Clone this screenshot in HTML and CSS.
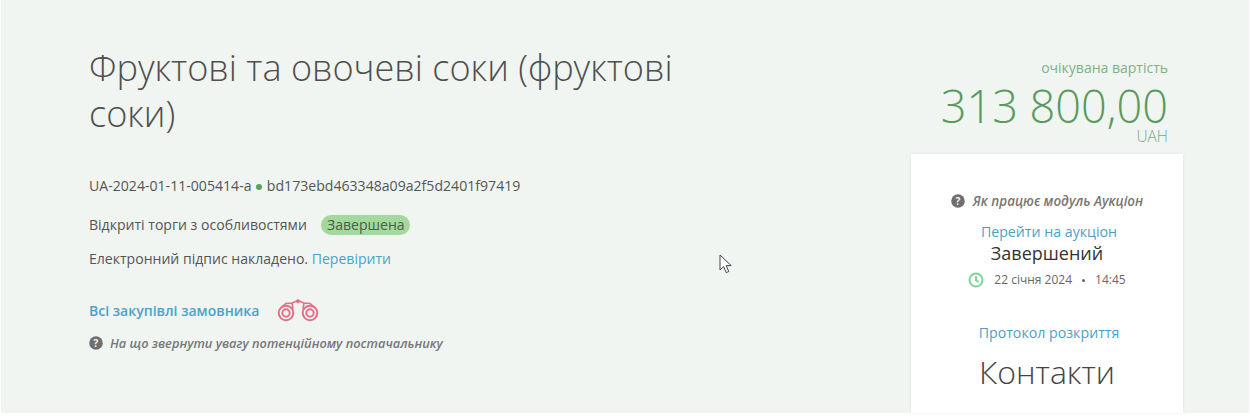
FILE: index.html
```html
<!DOCTYPE html>
<html lang="uk">
<head>
<meta charset="utf-8">
<title>Тендер</title>
<link rel="stylesheet" href="styles.css">
</head>
<body>
<main class="panel">
  <section class="main-col">
    <h1 class="title">Фруктові та овочеві соки (фруктові соки)</h1>
    <p class="row ids">UA-2024-01-11-005414-a <span class="dot"></span> bd173ebd463348a09a2f5d2401f97419</p>
    <p class="row type">Відкриті торги з особливостями <span class="badge">Завершена</span></p>
    <p class="row sign">Електронний підпис накладено. <a class="link" href="#">Перевірити</a></p>
    <div class="buyer">
      <a class="link buyer-link" href="#">Всі закупівлі замовника</a>
      <svg class="binoculars" viewBox="0 0 42 24" width="42" height="24" fill="none" stroke="#e86d86" stroke-width="2">
        <circle cx="9" cy="15" r="7.3"/><circle cx="9" cy="15" r="3.7"/>
        <circle cx="33" cy="15" r="7.3"/><circle cx="33" cy="15" r="3.7"/>
        <path d="M3.5 10 9 5.5 15 5 21 2.5 27 5 33 5.5 38.500 10M15 5 16 11M27 5 26 11" stroke-width="1.6"/>
        <circle cx="21" cy="3.2" r="2" fill="#e86d86" stroke="none"/>
      </svg>
    </div>
    <p class="hint main-hint"><svg class="q-icon" viewBox="0 0 14 14" width="14" height="14"><circle cx="7" cy="7" r="6.8" fill="#6f6f6f"/><text x="7" y="10.6" text-anchor="middle" class="q-mark">?</text></svg><em>На що звернути увагу потенційному постачальнику</em></p>
  </section>
  <aside class="side-col">
    <div class="price-label">очікувана вартість</div>
    <div class="price">313 800,00</div>
    <div class="currency">UAH</div>
    <div class="card">
      <p class="hint card-hint"><svg class="q-icon" viewBox="0 0 14 14" width="14" height="14"><circle cx="7" cy="7" r="6.8" fill="#6f6f6f"/><text x="7" y="10.6" text-anchor="middle" class="q-mark">?</text></svg><em>Як працює модуль Аукціон</em></p>
      <a class="link card-link" href="#">Перейти на аукціон</a>
      <div class="state">Завершений</div>
      <div class="date">
        <svg class="clock" viewBox="0 0 16 16" width="16" height="16" fill="none" stroke="#7fd49c" stroke-width="2"><circle cx="8" cy="8" r="6.5"/><path d="M8 4v4.4l2.8 1.6"/></svg>
        <span>22 січня 2024</span><span class="sep"></span><span>14:45</span>
      </div>
      <a class="link card-link protocol" href="#">Протокол розкриття</a>
      <h2 class="contacts">Контакти</h2>
    </div>
  </aside>
</main>
<svg class="cursor" viewBox="0 0 14 20" width="14" height="20"><path d="M1 1v15l3.600-3.400 2.600 6 2.600-1.100-2.600-5.900h5z" fill="#fff" stroke="#444" stroke-width="1"/></svg>
</body>
</html>
```
FILE: styles.css
```css
* { box-sizing: border-box; }
html, body { margin: 0; height: 419px; overflow: hidden; background: #fff; }
body { font-family: "Open Sans", "Noto Sans", sans-serif; color: #555; position: relative; }
p { margin: 0; }
.panel {
  height: 413px;
  margin-left: 1px;
  margin-right: 1px;
  background: #f0f5f2;
  display: flex;
  justify-content: space-between;
  padding: 44px 66px 0 88px;
}
.main-col { width: 620px; }
.title {
  margin: 0 0 40px;
  font-size: 36.1px;
  font-weight: 300;
  line-height: 46px;
  color: #4f4f4f;
}
.row { font-size: 14.05px; line-height: 20px; color: #555; }
.ids { margin-bottom: 19px; font-size: 14.1px; }
.dot { display: inline-block; width: 6px; height: 6px; border-radius: 50%; background: #5aa25f; margin: 0 1px; vertical-align: 1px; }
.type { margin-bottom: 14px; }
.badge {
  display: inline-block;
  margin-left: 11px;
  padding: 0 5.5px;
  line-height: 20px;
  border-radius: 10px;
  background: #a3d99b;
  color: #47604a;
}
.link { color: #4aa3c8; text-decoration: none; }
.buyer { display: flex; align-items: center; gap: 18px; margin-top: 29px; height: 24px; }
.buyer-link { font-weight: 600; font-size: 14.05px; }
.hint { display: flex; align-items: center; gap: 7px; font-weight: 600; color: #777; line-height: 20px; }
.main-hint { font-size: 12.8px; margin-top: 11px; }
.q-mark { font-size: 10px; font-weight: 700; fill: #f0f5f2; font-family: "Open Sans", sans-serif; }
.side-col { width: 272px; display: flex; flex-direction: column; }
.price-label, .price, .currency { text-align: right; padding-right: 15px; color: #5a9a5e; }
.price-label { font-size: 14px; line-height: 20px; color: #7fb184; margin-top: 14px; }
.price { font-size: 45.1px; font-weight: 300; line-height: 44px; margin-top: 6px; }
.currency { font-size: 15.5px; font-weight: 300; line-height: 16px; color: #7fa585; }
.card {
  background: #fff;
  height: 280px;
  margin-top: 10px;
  box-shadow: 0 0 3px rgba(0,0,0,.08);
  display: flex;
  flex-direction: column;
  align-items: center;
  padding-top: 37px;
}
.card-hint { font-size: 13.4px; gap: 8px; }
.card-link { font-size: 14.2px; line-height: 20px; color: #4f9fc4; margin-top: 11px; margin-left: 4px; }
.state { font-size: 18px; line-height: 22px; color: #333; }
.date { display: flex; align-items: center; font-size: 12px; line-height: 20px; color: #666; margin-top: 6px; gap: 10px; }
.sep { width: 3px; height: 3px; background: #666; border-radius: 50%; }
.protocol { margin-top: 33px; }
.contacts { margin: 7px 0 0; font-size: 32px; font-weight: 300; line-height: 44px; color: #444; }
.cursor { position: absolute; left: 719px; top: 254px; }
```
